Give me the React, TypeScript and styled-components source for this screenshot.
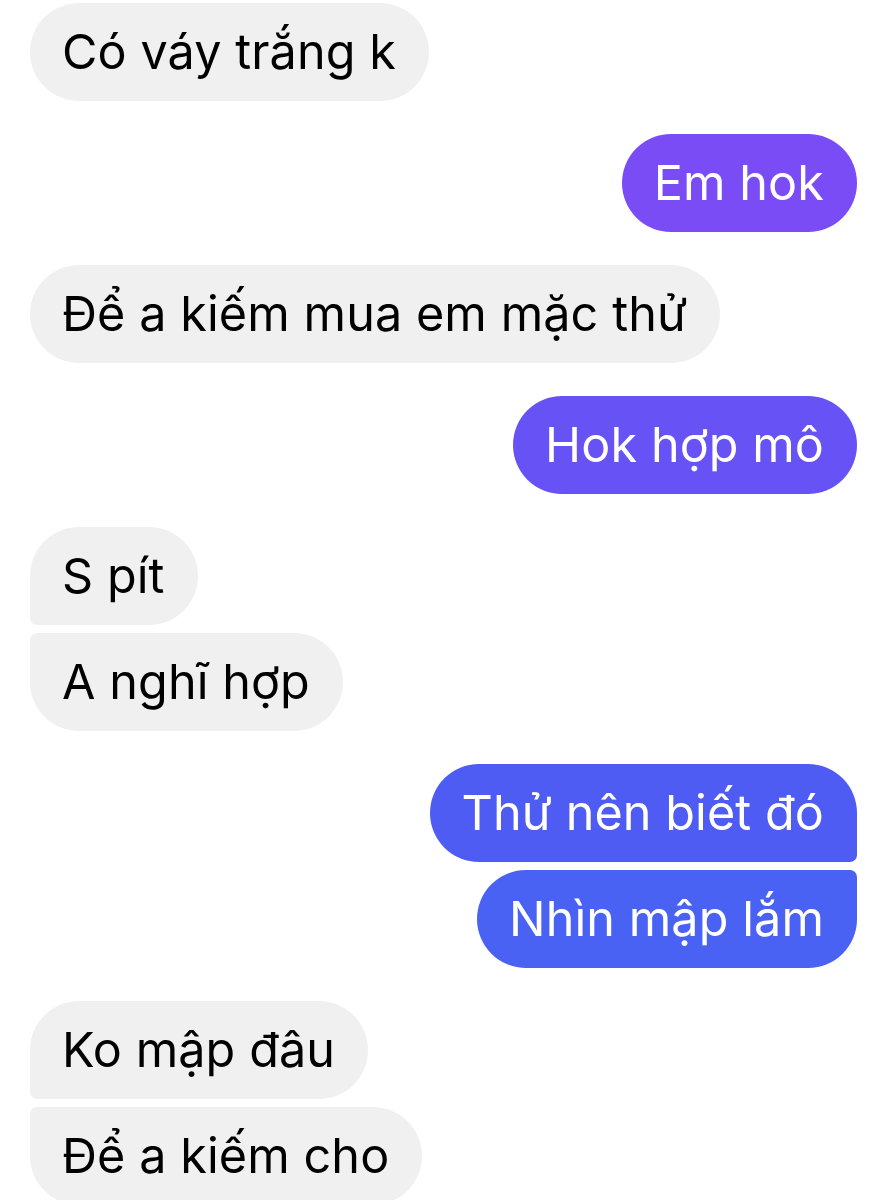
import React from "react";
import styled, { createGlobalStyle, css } from "styled-components";

const Global = createGlobalStyle`
  html, body { margin: 0; padding: 0; background: #ffffff; }
  body { font-family: Inter, "Noto Sans", "Liberation Sans", sans-serif; overflow: hidden; }
`;

const Thread = styled.div`
  display: flex;
  flex-direction: column;
  padding: 3px 21px 0 30px;
  height: 1200px;
  box-sizing: border-box;
  overflow: hidden;
`;

const Group = styled.div<{ $mine?: boolean }>`
  display: flex;
  flex-direction: column;
  align-items: ${(p) => (p.$mine ? "flex-end" : "flex-start")};
  gap: 8px;
  margin-bottom: 33px;
`;

type Pos = "single" | "first" | "last";

const Bubble = styled.div<{ $mine?: boolean; $pos: Pos; $bg?: string }>`
  box-sizing: border-box;
  height: 98px;
  flex-shrink: 0;
  display: flex;
  align-items: center;
  padding: 0 33px 2px 32px;
  font-size: 48.5px;
  letter-spacing: 0.1px;
  white-space: nowrap;
  border-radius: 49px;
  background: ${(p) => (p.$mine ? p.$bg : "#f0f0f0")};
  color: ${(p) => (p.$mine ? "#ffffff" : "#000000")};
  ${(p) =>
    p.$pos === "first" &&
    (p.$mine
      ? css`border-bottom-right-radius: 7px;`
      : css`border-bottom-left-radius: 7px;`)}
  ${(p) =>
    p.$pos === "last" &&
    (p.$mine
      ? css`border-top-right-radius: 7px;`
      : css`border-top-left-radius: 7px;`)}
`;

type Msg = { text: string; bg?: string };
type G = { mine?: boolean; msgs: Msg[] };

const groups: G[] = [
  { msgs: [{ text: "Có váy trắng k" }] },
  { mine: true, msgs: [{ text: "Em hok", bg: "#7a4cf6" }] },
  { msgs: [{ text: "Để a kiếm mua em mặc thử" }] },
  { mine: true, msgs: [{ text: "Hok hợp mô", bg: "#6652f5" }] },
  { msgs: [{ text: "S pít" }, { text: "A nghĩ hợp" }] },
  {
    mine: true,
    msgs: [
      { text: "Thử nên biết đó", bg: "#4e5cf4" },
      { text: "Nhìn mập lắm", bg: "#4962f3" },
    ],
  },
  { msgs: [{ text: "Ko mập đâu" }, { text: "Để a kiếm cho" }] },
];

export default function App() {
  return (
    <>
      <Global />
      <Thread>
        {groups.map((g, gi) => (
          <Group key={gi} $mine={g.mine}>
            {g.msgs.map((m, mi) => {
              const pos: Pos =
                g.msgs.length === 1 ? "single" : mi === 0 ? "first" : "last";
              return (
                <Bubble key={mi} $mine={g.mine} $pos={pos} $bg={m.bg}>
                  {m.text}
                </Bubble>
              );
            })}
          </Group>
        ))}
      </Thread>
    </>
  );
}
